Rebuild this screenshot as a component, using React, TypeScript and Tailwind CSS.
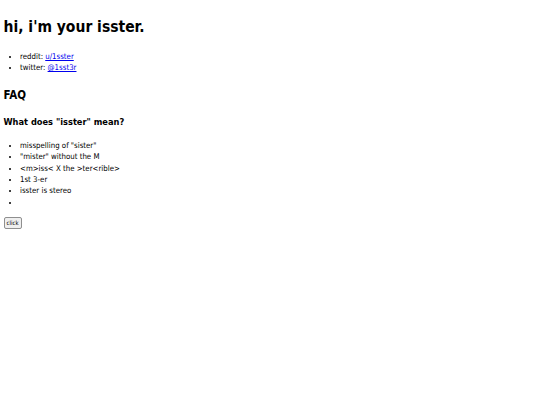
import React from 'react'

const meanings = ['misspelling of "sister"', '"mister" without the M', '<m>iss< X the >ter<rible>', '1st 3-er', 'isster is stereo', '']

export default function App() {
  return (
    <div className="min-h-[405px] bg-white px-[3.5px] pt-px text-black font-['DejaVu_Sans_Condensed','DejaVu_Sans',sans-serif] text-[7.8px] leading-[11.33px]">
      <h1 className="mt-[15px] text-[15.5px] font-bold leading-[22px]">hi, i'm your isster.</h1>

      <ul className="mt-[13px] list-disc pl-[16.5px]">
        <li>
          reddit:{' '}
          <a href="#" className="text-[#0000ee] underline">
            u/1sster
          </a>
        </li>
        <li>
          twitter:{' '}
          <a href="#" className="text-[#0000ee] underline">
            @1sst3r
          </a>
        </li>
      </ul>

      <h2 className="mt-[13px] text-[11.5px] font-bold leading-[17px]">FAQ</h2>
      <h3 className="mt-[11px] text-[9.2px] font-bold leading-[13px]">What does "isster" mean?</h3>

      <ul className="mt-[12.5px] list-disc pl-[16.5px]">
        {meanings.map((m, i) => (
          <li key={i}>{m}</li>
        ))}
      </ul>

      <button className="mt-[8.5px] rounded-[2px] border border-[#8f8f8f] bg-[#efefef] px-[2px] text-[6px] leading-[10px]">
        click
      </button>
    </div>
  )
}
